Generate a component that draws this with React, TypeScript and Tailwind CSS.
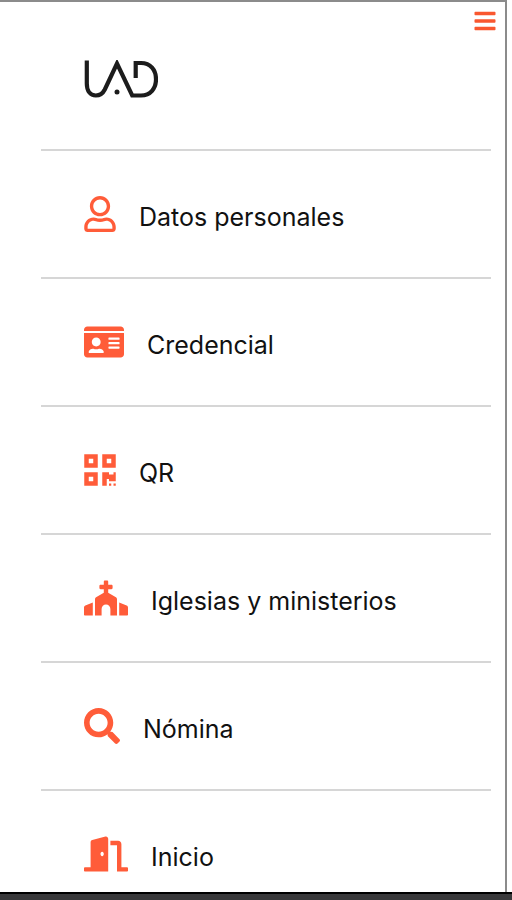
import React from 'react';
import type { IconType } from 'react-icons';
import { FaBars, FaChurch, FaDoorOpen, FaIdCard, FaQrcode, FaRegUser, FaSearch } from 'react-icons/fa';

interface MenuItem {
    label: string;
    icon: IconType;
    // Font Awesome glyphs share a height but not a width
    width: string;
}

const menuItems: MenuItem[] = [
    { label: 'Datos personales', icon: FaRegUser, width: 'w-8' },
    { label: 'Credencial', icon: FaIdCard, width: 'w-10' },
    { label: 'QR', icon: FaQrcode, width: 'w-8' },
    { label: 'Iglesias y ministerios', icon: FaChurch, width: 'w-11' },
    { label: 'Nómina', icon: FaSearch, width: 'w-9' },
    { label: 'Inicio', icon: FaDoorOpen, width: 'w-11' },
];

const Logo: React.FC = () => (
    <svg viewBox="0 0 74 38" className="h-[38px] w-[74px]" fill="none" stroke="#1c1c1c" strokeWidth="4.2" role="img" aria-label="UAD">
        <path d="M2.800 0.500v23c0 7.500 3.500 12 9 12 4.500 0 7-2 9-6L33 3.500l15.200 32H57c9.500 0 15-7 15-16.200S66.500 3 57 3h-5.300v15" />
        <circle cx="33" cy="32" r="2.500" fill="#1c1c1c" stroke="none" />
    </svg>
);

export default function App() {
    return (
        <div className="flex h-screen flex-col overflow-hidden bg-white font-[Inter,'Liberation_Sans',sans-serif]">
            <div className="mr-[5px] min-h-0 flex-1 overflow-hidden border-t-2 border-r-2 border-[#8b8b8b]">
                <header className="relative h-[147px] pt-[58px] pl-[84px]">
                    <button type="button" aria-label="Menú" className="absolute top-[7px] right-2 text-[#f9572f]">
                        <FaBars className="size-6" />
                    </button>
                    <Logo />
                </header>

                <nav className="mr-[14px] ml-[41px]">
                    <ul>
                        {menuItems.map(({ label, icon: Icon, width }) => (
                            <li key={label} className="h-32 border-t-2 border-[#d6d6d6]">
                                <a href="#" className="flex items-start gap-[23px] pt-[45px] pl-[43px] text-[#111]">
                                    <Icon className={`h-9 shrink-0 text-[#ff5c39] ${width}`} />
                                    <span className="pt-[3px] text-[25px] leading-9 whitespace-nowrap">{label}</span>
                                </a>
                            </li>
                        ))}
                    </ul>
                </nav>
            </div>
            <footer className="h-2 shrink-0 border-t-2 border-black bg-[#39393b]" />
        </div>
    );
}
